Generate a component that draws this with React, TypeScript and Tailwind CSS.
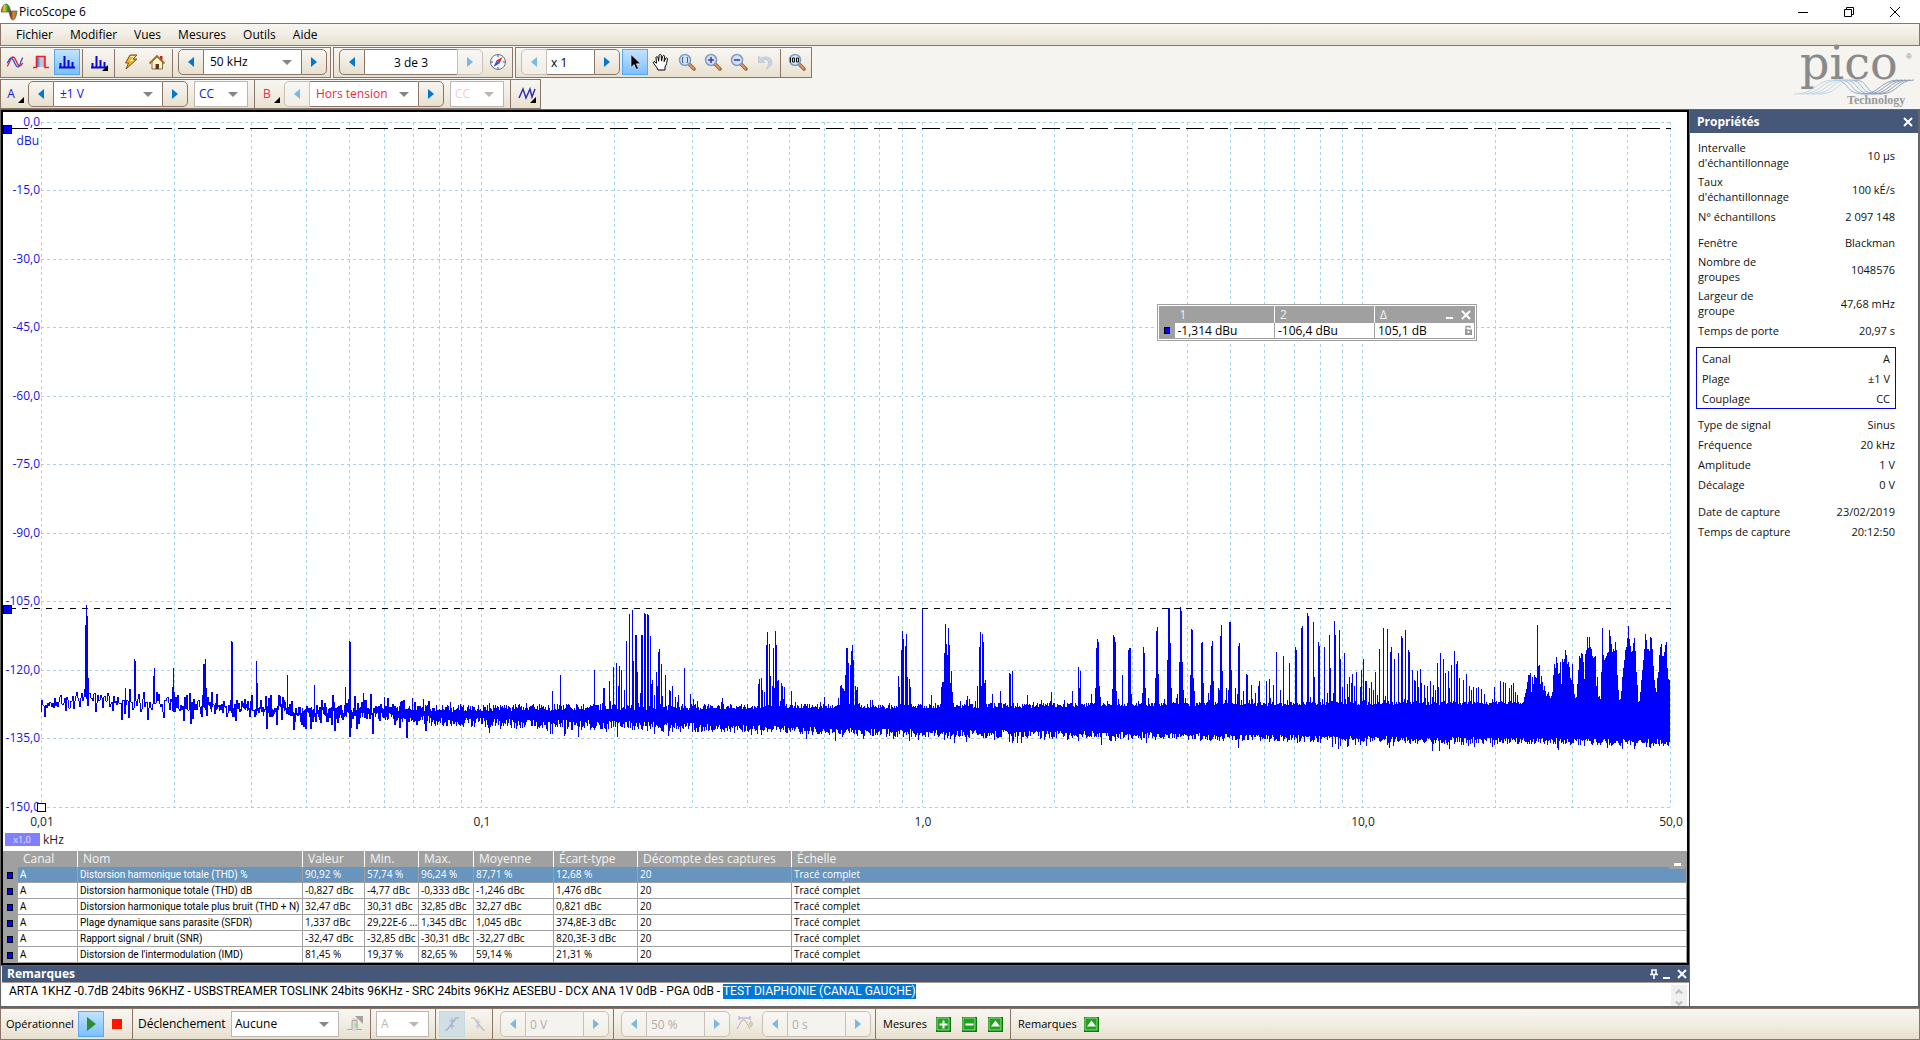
import React, { useEffect, useRef } from "react";

/* ---------- shared classes ---------- */
const BAR = "bg-linear-to-b from-[#f8f6f2] via-[#f1ede3] to-[#e8e0ce] border border-[#8b7468]";

/* ---------- small controls ---------- */
function Sep({ className = "ml-[2px] mr-[3px]" }: { className?: string }) {
  return <div className={`w-px self-stretch bg-[#8b7468] ${className}`} />;
}

function IconButton({ label, active = false, children }: { label: string; active?: boolean; children: React.ReactNode }) {
  return (
    <button
      aria-label={label}
      className={`relative flex h-[26px] w-[26px] shrink-0 items-center justify-center ${
        active ? "border border-[#5aa7ee] bg-linear-to-b from-[#c2e2ff] to-[#7cc0ff]" : ""
      }`}
    >
      {children}
    </button>
  );
}

function Arrow({ dir, muted }: { dir: "l" | "r"; muted?: boolean }) {
  return (
    <svg width="6" height="10" viewBox="0 0 6 10">
      <path d={dir === "l" ? "M6 0V10L0 5Z" : "M0 0V10L6 5Z"} fill={muted ? "#79b9e4" : "#0078cf"} />
    </svg>
  );
}

function Chevron({ muted }: { muted?: boolean }) {
  return (
    <svg className="pointer-events-none absolute right-[9px] top-1/2 -mt-[2px]" width="10" height="5" viewBox="0 0 10 5">
      <path d="M0 0H10L5 5Z" fill={muted ? "#bdb6b0" : "#868686"} />
    </svg>
  );
}

type SpinnerProps = {
  label: string;
  value: string;
  width: string;
  color?: string;
  drop?: boolean;
  center?: boolean;
  leftMuted?: boolean;
  rightMuted?: boolean;
  disabled?: boolean;
};

function Spinner({ label, value, width, color = "text-black", drop, center, leftMuted, rightMuted, disabled }: SpinnerProps) {
  const lm = leftMuted || disabled;
  const rm = rightMuted || disabled;
  return (
    <div className="flex h-[26px] shrink-0">
      <button
        aria-label={`${label} précédent`}
        className={`flex w-[26px] items-center justify-center rounded-l-[5px] border bg-linear-to-b ${
          lm ? "border-[#c9bfb8] from-[#f8f7f5] to-[#f2eee5]" : "border-[#8b7468] from-[#f8f6f2] to-[#e8e0ce]"
        }`}
      >
        <Arrow dir="l" muted={lm} />
      </button>
      <div className={`relative ${width} border-y ${disabled ? "border-[#c9bfb8] bg-[#f5f3f0]" : "border-[#8b7468] bg-white"}`}>
        {drop ? (
          <>
            <select aria-label={label} className={`h-full w-full appearance-none bg-transparent pl-[6px] ${color}`}>
              <option>{value}</option>
            </select>
            <Chevron />
          </>
        ) : (
          <input
            aria-label={label}
            defaultValue={value}
            disabled={disabled}
            className={`h-full w-full bg-transparent ${center ? "text-center" : "pl-[4px]"} ${disabled ? "text-[#b3aeaa]" : color}`}
          />
        )}
      </div>
      <button
        aria-label={`${label} suivant`}
        className={`flex w-[26px] items-center justify-center rounded-r-[5px] border bg-linear-to-b ${
          rm ? "border-[#c9bfb8] from-[#f8f7f5] to-[#f2eee5]" : "border-[#8b7468] from-[#f8f6f2] to-[#e8e0ce]"
        }`}
      >
        <Arrow dir="r" muted={rm} />
      </button>
    </div>
  );
}

function Combo({ label, value, width, color, muted }: { label: string; value: string; width: string; color: string; muted?: boolean }) {
  return (
    <div className={`relative h-[26px] shrink-0 border border-[#bdb6b0] bg-white ${width}`}>
      <select aria-label={label} className={`h-full w-full appearance-none bg-transparent pl-[4px] ${color}`}>
        <option>{value}</option>
      </select>
      <Chevron muted={muted} />
    </div>
  );
}

function Corner() {
  return (
    <svg className="absolute bottom-[4px] right-[4px]" width="6" height="6" viewBox="0 0 6 6">
      <path d="M6 0V6H0Z" fill="#000" />
    </svg>
  );
}

/* ---------- icons ---------- */
const ic = { width: 18, height: 18, viewBox: "0 0 18 18", fill: "none" } as const;

function AppIcon() {
  return (
    <svg width="17" height="18" viewBox="0 0 17 18">
      <defs>
        <linearGradient id="rb" x1="0" x2="1" y1="0" y2="0">
          <stop offset="0" stopColor="#e02020" />
          <stop offset=".2" stopColor="#e8d020" />
          <stop offset=".42" stopColor="#20a030" />
          <stop offset=".6" stopColor="#7a3a20" />
          <stop offset=".78" stopColor="#f08020" />
          <stop offset="1" stopColor="#30a030" />
        </linearGradient>
      </defs>
      <path d="M0 9C1 3 3 1 5 1c3 0 4 4 4.500 7H16C15.500 13 14 17 12 17c-2.500 0-3-5-4-8Z" fill="url(#rb)" stroke="#55585a" strokeWidth=".7" />
    </svg>
  );
}
const Waves = () => (
  <svg {...ic}>
    <path d="M1 13C3 13 4 4 7 4s4 9 6.500 9c1.500 0 2-2 3.500-3" stroke="#e02530" strokeWidth="1.400" />
    <path d="M1 10c2-1 2-5 4-5 3 0 4 9 7 9 2.500 0 3-9 5-9" stroke="#3d55d8" strokeWidth="1.400" />
  </svg>
);
const Pulse = () => (
  <svg {...ic}>
    <defs>
      <linearGradient id="pg" x1="0" x2="1" y1="0" y2="0">
        <stop offset="0" stopColor="#2d7fd0" />
        <stop offset=".5" stopColor="#b8d8e8" />
        <stop offset="1" stopColor="#e88" />
      </linearGradient>
    </defs>
    <path d="M5 4h8v10H5z" fill="url(#pg)" />
    <path d="M1 14.500H4.500V3.500h8.500v11h4" stroke="#f02028" strokeWidth="1.600" />
  </svg>
);
const Bars = () => (
  <svg {...ic}>
    <path d="M2.500 14V10M6.500 14V3M10.500 14V7M14.500 14V9M1 14.500H17" stroke="#0808d8" strokeWidth="2" />
  </svg>
);
const Bolt = () => (
  <svg {...ic}>
    <path d="M8 2h7l-4 4h4L4 16l2.500-6H3.500Z" fill="#f0b428" stroke="#7d4b10" />
    <path d="M8.500 3.500h4l-4 4h3" stroke="#fff0a0" />
  </svg>
);
const House = () => (
  <svg {...ic}>
    <path d="M12 3h2.500v5H12z" fill="#b02818" />
    <path d="M4 9l5-5 5.500 5v7H4Z" fill="#fff3cf" stroke="#8a6a30" />
    <path d="M1.500 10.500L9 3l7.500 7.500" stroke="#a0702c" strokeWidth="1.800" />
    <path d="M7.500 11h3.500v5H7.500z" fill="#5a3818" />
  </svg>
);
const Compass = () => (
  <svg {...ic}>
    <circle cx="9" cy="9" r="7.500" fill="#f4f7fb" stroke="#6b7078" />
    <path d="M9 2v2M9 14v2M2 9h2M14 9h2" stroke="#345ca8" />
    <path d="M13.500 4l-3 6.500-3-3Z" fill="#e02a20" />
    <path d="M4.500 14l3-6.500 3 3Z" fill="#3558c8" />
  </svg>
);
const Pointer = () => (
  <svg {...ic}>
    <path d="M5 1.500v13l3-3 2.200 5 2.300-1-2.200-4.700H14.500Z" fill="#000" stroke="#fff" strokeWidth=".6" />
  </svg>
);
const Hand = () => (
  <svg {...ic}>
    <path
      d="M6 17C5 14 2 11.500 1.200 9.300c.8-1.100 2-.6 3.300 1L4 4.500c.3-1.300 1.800-1.200 2 .2l.6 3.500L7.200 2.300c.3-1.200 1.800-1.200 2 0l.3 5.800 1.200-5c.4-1.100 1.800-.8 1.900.3l-.5 5.300 1.500-3.300c.6-1 1.900-.5 1.800.6-.5 3.300-1 6-2.400 8V17Z"
      fill="#fff"
      stroke="#000"
    />
  </svg>
);
function Lens({ children }: { children?: React.ReactNode }) {
  return (
    <svg {...ic}>
      <path d="M11 11l5 5" stroke="#8a5a38" strokeWidth="3.400" strokeLinecap="round" />
      <path d="M11.300 11.300l4.400 4.400" stroke="#e8955a" strokeWidth="1.800" strokeLinecap="round" />
      <circle cx="7" cy="7" r="5.500" fill="#cfe2f6" stroke="#7f9cc4" strokeWidth="1.500" />
      {children}
    </svg>
  );
}
const Undo = () => (
  <svg {...ic}>
    <path d="M2.500 3v6.500H9L6.800 7.300C10 5.500 13 7 12.500 10.500 12.200 13 11 14.500 10 16c4-1.500 6-4 5.800-7C15.500 4 9.500 2.500 4.800 5.300Z" fill="#ccd3e0" stroke="#b4bccb" strokeWidth=".6" />
  </svg>
);
const Generator = () => (
  <svg {...ic}>
    <path d="M1 13L5 4l3 9 4-9 2 8 3-8" stroke="#3232a8" strokeWidth="1.500" />
  </svg>
);
const Green = ({ kind }: { kind: "plus" | "minus" | "up" }) => (
  <svg width="15" height="15" viewBox="0 0 15 15">
    <path d="M0 0H15V15H0Z" fill="#0a7a0a" />
    <path d="M1 1H13V13H1Z" fill="#1fa31f" stroke="#b8e8b0" strokeWidth=".8" />
    {kind === "plus" && <path d="M7.500 3.500v8M3.500 7.500h8" stroke="#fff" strokeWidth="2" />}
    {kind === "minus" && <path d="M3.500 7.500h8" stroke="#fff" strokeWidth="2" />}
    {kind === "up" && <path d="M7.500 3.500L12 9.500H3Z" fill="#fff" />}
  </svg>
);

function PicoLogo() {
  return (
    <svg className="mr-[2px] shrink-0 overflow-visible" width="124" height="62" viewBox="0 0 124 62" role="img" aria-label="pico Technology">
      <text x="6" y="33" fontFamily="DejaVu Serif, serif" fontSize="46" fill="#8a8a8a">
        pico
      </text>
      {[0, 1, 2, 3, 4].map((i) => (
        <g key={i} fill="none" strokeWidth="0.9">
          <path d={`M${i * 6} 48C${22 + i * 6} 48 ${22 + i * 5} 34 ${40 + i * 5} 34`} stroke="#b9d2ea" />
          <path d={`M${40 + i * 5} 34C${56 + i * 5} 34 ${50 + i * 5} 48 ${70 + i * 4} 48`} stroke="#8ea8c8" />
          <path d={`M${70 + i * 4} 48C${84 + i * 5} 48 ${88 + i * 4} 34 ${104 + i * 4} 34`} stroke="#8494b0" />
        </g>
      ))}
      <text x="112" y="13" fontFamily="Liberation Sans, sans-serif" fontSize="8" fill="#8a8a8a">
        ®
      </text>
      <text x="53" y="58" fontFamily="Liberation Serif, serif" fontWeight="700" fontSize="12" fill="#9a9a9a">
        Technology
      </text>
    </svg>
  );
}

/* ---------- spectrum ---------- */
const X0 = 41;
const X1 = 1670;
const DECADE = 440.4;

/* single-column peaks: x, top */
const PEAKS: number[] = [
  85, 625, 86, 605, 87, 616, 88, 678, 125, 688, 134, 659, 135, 661, 153, 676, 154, 668, 172, 687, 173, 668, 174, 692, 190, 693, 203, 664, 204, 664,
  205, 659, 206, 688, 231, 641, 232, 642, 256, 661, 257, 683, 287, 675, 314, 685, 345, 687, 349, 641, 350, 642, 363, 693, 384, 697, 412, 698,
  423, 699, 552, 691, 560, 675, 594, 670, 603, 688, 604, 688, 609, 681, 613, 667, 616, 663, 618, 686, 619, 666, 621, 670, 624, 690, 626, 641, 629, 614,
  632, 610, 633, 661, 635, 635, 636, 635, 637, 672, 640, 693, 641, 635, 642, 635, 644, 613, 645, 614, 647, 614, 648, 615, 650, 636, 651, 684, 652, 680,
  654, 695, 656, 672, 657, 686, 658, 652, 659, 649, 661, 664, 662, 696, 665, 675, 669, 690, 670, 691, 672, 686, 675, 697, 678, 695, 684, 668, 690, 694,
  722, 698, 758, 684, 759, 679, 761, 678, 762, 690, 764, 692, 766, 645, 767, 632, 769, 644, 770, 676, 772, 686, 773, 648, 774, 688, 775, 631, 776, 645,
  777, 681, 778, 680, 781, 683, 782, 686, 784, 687, 791, 691, 824, 697, 838, 698, 840, 686, 841, 685, 842, 688, 843, 689, 844, 691, 845, 675, 846, 648,
  847, 648, 848, 663, 850, 665, 851, 651, 852, 645, 853, 660, 855, 686, 856, 690, 857, 687, 898, 676, 899, 687, 901, 650, 902, 631, 903, 639, 905, 646,
  906, 634, 907, 677, 909, 679, 910, 687, 922, 609, 931, 695, 941, 687, 942, 682, 943, 682, 944, 653, 945, 624, 946, 644, 947, 655, 948, 628, 949, 645,
  950, 683, 951, 671, 952, 692, 967, 696, 977, 686, 979, 647, 980, 632, 981, 686, 982, 634, 983, 642, 984, 683, 985, 680, 992, 694, 1000, 691,
  1009, 673, 1010, 674, 1012, 671, 1027, 695, 1051, 692, 1072, 691, 1078, 667, 1079, 688, 1080, 671, 1091, 694, 1095, 688, 1096, 648, 1097, 639,
  1098, 642, 1099, 686, 1100, 697, 1112, 689, 1113, 635, 1114, 637, 1115, 642, 1116, 691, 1122, 675, 1128, 650, 1129, 648, 1130, 648, 1131, 694,
  1142, 693, 1143, 647, 1144, 653, 1145, 688, 1155, 678, 1156, 631, 1157, 627, 1158, 674, 1167, 660, 1168, 608, 1169, 608, 1170, 643, 1171, 688,
  1177, 694, 1179, 662, 1180, 607, 1181, 611, 1182, 662, 1183, 690, 1190, 675, 1191, 629, 1192, 630, 1193, 678, 1194, 691, 1201, 643, 1202, 642,
  1203, 683, 1208, 693, 1210, 685, 1211, 646, 1212, 641, 1213, 681, 1218, 688, 1219, 690, 1220, 636, 1221, 625, 1222, 671, 1226, 688, 1228, 690,
  1229, 622, 1230, 622, 1231, 670, 1235, 688, 1237, 694, 1238, 646, 1239, 643, 1243, 691, 1246, 674, 1247, 675, 1251, 685, 1255, 693, 1258, 686,
  1259, 681, 1266, 681, 1269, 679, 1273, 685, 1276, 652, 1280, 690, 1283, 656, 1289, 663, 1295, 647, 1296, 650, 1301, 628, 1302, 626, 1307, 613,
  1308, 616, 1313, 622, 1314, 677, 1318, 642, 1319, 646, 1324, 647, 1327, 693, 1329, 635, 1330, 668, 1333, 693, 1334, 621, 1335, 635, 1339, 630,
  1340, 659, 1342, 687, 1344, 653, 1347, 684, 1349, 677, 1351, 683, 1352, 674, 1354, 686, 1356, 672, 1360, 687, 1361, 670, 1363, 659, 1365, 681,
  1366, 681, 1369, 688, 1371, 682, 1373, 690, 1375, 672, 1377, 695, 1379, 649, 1383, 628, 1387, 629, 1390, 652, 1391, 647, 1394, 659, 1398, 653,
  1401, 636, 1402, 638, 1405, 630, 1408, 650, 1409, 652, 1412, 670, 1414, 680, 1415, 681, 1417, 671, 1418, 687, 1420, 669, 1421, 683, 1424, 685,
  1427, 686, 1430, 681, 1433, 685, 1435, 690, 1437, 663, 1438, 687, 1440, 653, 1443, 659, 1445, 673, 1448, 671, 1449, 688, 1451, 665, 1454, 651,
  1456, 664, 1457, 661, 1459, 678, 1463, 680, 1466, 674, 1469, 686, 1471, 690, 1473, 687, 1476, 688, 1478, 687, 1481, 689, 1484, 694, 1494, 687,
  1500, 681, 1503, 682, 1505, 683, 1509, 688, 1511, 685, 1513, 683, 1515, 692, 1517, 695,
];

/* continuous top edge of the right-hand lobes: x, top */
const LOBES: number[] = [
  1524, 697, 1526, 689, 1528, 675, 1529, 675, 1530, 673, 1531, 692, 1532, 677, 1533, 684, 1534, 675, 1535, 677, 1536, 678, 1537, 625, 1538, 666, 1539, 665,
  1540, 684, 1541, 676, 1542, 682, 1543, 690, 1544, 686, 1546, 696, 1548, 692, 1550, 699, 1552, 692, 1553, 675, 1554, 664, 1555, 668, 1556, 657, 1557, 663,
  1558, 674, 1559, 673, 1560, 662, 1561, 684, 1562, 659, 1563, 662, 1564, 659, 1565, 650, 1566, 655, 1567, 664, 1568, 662, 1569, 667, 1570, 678, 1571, 680,
  1572, 664, 1573, 684, 1574, 694, 1576, 702, 1577, 684, 1578, 670, 1579, 656, 1580, 658, 1581, 653, 1582, 654, 1583, 662, 1584, 679, 1585, 654, 1586, 650,
  1587, 637, 1588, 648, 1589, 637, 1590, 647, 1591, 649, 1592, 656, 1593, 658, 1594, 657, 1595, 656, 1596, 686, 1597, 677, 1598, 697, 1599, 696, 1600, 699,
  1601, 672, 1602, 628, 1603, 655, 1604, 660, 1605, 658, 1607, 653, 1608, 652, 1609, 630, 1610, 636, 1611, 644, 1612, 652, 1613, 649, 1614, 651, 1615, 642,
  1616, 650, 1617, 675, 1618, 690, 1619, 700, 1620, 699, 1621, 691, 1622, 677, 1623, 668, 1624, 660, 1625, 650, 1626, 647, 1627, 638, 1628, 626, 1629, 639,
  1630, 646, 1631, 652, 1632, 651, 1633, 643, 1634, 638, 1635, 651, 1636, 672, 1637, 685, 1638, 702, 1639, 701, 1640, 692, 1641, 680, 1642, 670, 1643, 660,
  1644, 649, 1645, 634, 1646, 640, 1647, 649, 1648, 649, 1649, 651, 1650, 637, 1651, 638, 1652, 649, 1653, 666, 1654, 680, 1655, 688, 1656, 692, 1657, 678,
  1658, 672, 1659, 655, 1660, 647, 1661, 644, 1662, 656, 1663, 656, 1664, 652, 1665, 645, 1666, 642, 1667, 668, 1668, 679, 1669, 680, 1670, 680,
];

function interp(points: number[], x: number) {
  for (let i = 2; i < points.length; i += 2) {
    if (x <= points[i]) {
      const t = (x - points[i - 2]) / (points[i] - points[i - 2]);
      return points[i - 1] + t * (points[i + 1] - points[i - 1]);
    }
  }
  return points[points.length - 1];
}

function buildTrace() {
  let seed = 20190223;
  const rnd = () => {
    seed = (seed * 1664525 + 1013904223) % 4294967296;
    return seed / 4294967296;
  };
  const peaks = new Map<number, number>();
  for (let i = 0; i < PEAKS.length; i += 2) peaks.set(PEAKS[i], PEAKS[i + 1]);

  const CENTER = [41, 704, 86, 699, 150, 704, 230, 708, 320, 713, 400, 715, 1670, 715];
  const TOP = [41, 700, 350, 709, 480, 708, 620, 707, 920, 706, 1200, 704, 1670, 702];
  const BOTTOM = [41, 708, 350, 719, 420, 723, 480, 725, 620, 728, 760, 731, 920, 735, 1150, 737, 1362, 741, 1670, 744];
  let d = "";
  let prev = 712;
  for (let x = X0; x < X1; x++) {
    let top: number;
    let bottom: number;
    if (x < 430) {
      const amp = 7 + ((x - X0) / 389) * 8;
      const v = interp(CENTER, x) + (rnd() + rnd() + rnd() - 1.5) * amp * 1.3 + (rnd() < 0.06 ? amp * 0.8 : 0);
      top = Math.min(prev, v);
      bottom = Math.max(prev, v);
      if (x > 200) {
        const f = (x - 200) / 230;
        top = Math.min(top, interp(TOP, x) + (1 - f) * 5 + rnd() * 7 - 4);
        bottom = Math.max(bottom, interp(BOTTOM, x) - (1 - f) * 5 - rnd() * 7 + (rnd() < 0.15 ? rnd() * 8 : 0));
      }
      prev = v;
    } else {
      const rough = x < 700 ? 7 : x < 1100 ? 5 : 4;
      top = interp(TOP, x) + (rnd() - 0.5) * rough - (rnd() < 0.14 ? rnd() * 6 : 0);
      bottom = interp(BOTTOM, x) + (rnd() - 0.7) * (rough + 3) + (rnd() < 0.14 ? rnd() * 8 : 0);
    }
    const p = peaks.get(x);
    if (p !== undefined) top = Math.min(top, p);
    if (x >= 1524) top = Math.min(top, interp(LOBES, x));
    const a = Math.round(top);
    const b = Math.max(a + 1, Math.round(bottom));
    d += `M${x} ${a}h1V${b}h-1Z`;
  }
  return d;
}
const TRACE = buildTrace();

const VLINES: number[] = [];
for (let dec = 0; dec < 4; dec++) {
  for (let m = 1; m < 10; m++) {
    const x = X0 + DECADE * (dec + Math.log10(m));
    if (x < X1) VLINES.push(Math.round(x));
  }
}
VLINES.push(X1);
const Y_LABELS = ["0,0", "-15,0", "-30,0", "-45,0", "-60,0", "-75,0", "-90,0", "-105,0", "-120,0", "-135,0", "-150,0"];
const X_LABELS: [number, string][] = [
  [42, "0,01"],
  [482, "0,1"],
  [923, "1,0"],
  [1363, "10,0"],
  [1671, "50,0"],
];

function Spectrum() {
  return (
    <svg className="block h-full w-full" viewBox="3 112 1684 739" preserveAspectRatio="xMinYMin meet" role="img" aria-label="Spectre">
      <g stroke="#a5d3e0" strokeWidth="1" shapeRendering="crispEdges">
        {VLINES.map((x) => (
          <path key={x} d={`M${x + 0.5} 122V807`} strokeDasharray="3 3" />
        ))}
        {Y_LABELS.map((t, i) => (
          <path key={t} d={`M41 ${Math.floor(122 + 68.5 * i) + 0.5}H1671`} strokeDasharray="3 3" />
        ))}
      </g>
      <g fontFamily="Open Sans, sans-serif" fontSize="12">
        <g fill="#1414e6" textAnchor="end">
          {Y_LABELS.map((t, i) => (
            <text key={t} x="40" y={126 + Math.floor(68.5 * i)}>
              {t}
            </text>
          ))}
          <text x="39" y="145">
            dBu
          </text>
        </g>
        <g fill="#222" textAnchor="middle">
          {X_LABELS.map(([x, t]) => (
            <text key={t} x={x} y="826">
              {t}
            </text>
          ))}
        </g>
        <text x="43" y="844" fill="#222">
          kHz
        </text>
      </g>
      <path d="M10 128.500H1671" stroke="#000" strokeDasharray="18 6" shapeRendering="crispEdges" />
      <path d="M10 608.500H1671" stroke="#000" strokeDasharray="6 6" shapeRendering="crispEdges" />
      <path d={TRACE} fill="#0000ff" shapeRendering="crispEdges" />
      <g shapeRendering="crispEdges">
        <path d="M3.500 125.500h8v8h-8z" fill="#00f" stroke="#000" />
        <path d="M3.500 605.500h8v8h-8z" fill="#00f" stroke="#000" />
        <path d="M37.500 803.500h8v8h-8z" fill="#fff" stroke="#000" />
        <path d="M5 833h35v13H5z" fill="#8080ff" />
      </g>
      <text x="22" y="843" fontFamily="Open Sans, sans-serif" fontSize="9" fill="#e6e6ff" textAnchor="middle">
        x1,0
      </text>
    </svg>
  );
}

/* ---------- ruler readout ---------- */
function CloseX({ size = 9 }: { size?: number }) {
  return (
    <svg width={size} height={size} viewBox="0 0 10 10">
      <path d="M1 1l8 8M9 1l-8 8" stroke="#fff" strokeWidth="2" />
    </svg>
  );
}

function Marker() {
  return <div className="h-[7px] w-[6px] border border-black bg-[#0000ff]" />;
}

function RulerLegend() {
  return (
    <div className="absolute left-[1154px] top-[192px] w-[320px] border border-[#a0a0a0] bg-white p-px text-[12px] leading-[15px]">
      <table className="w-full table-fixed border-collapse border border-[#a0a0a0]">
        <thead className="bg-[#a0a0a0] text-left text-[#f0f0f0]">
          <tr className="h-[16px]">
            <th className="w-[15px]" />
            <th className="w-[100px] border-r border-white pl-[5px] font-normal">1</th>
            <th className="w-[100px] border-r border-white pl-[5px] font-normal">2</th>
            <th className="pl-[5px] font-normal">
              <div className="flex items-center">
                <span className="flex-1">Δ</span>
                <button aria-label="Réduire" className="mr-[8px] mt-[6px] h-[2px] w-[7px] bg-white" />
                <button aria-label="Fermer la légende" className="mr-[3px]">
                  <CloseX size={10} />
                </button>
              </div>
            </th>
          </tr>
        </thead>
        <tbody>
          <tr className="h-[16px]">
            <td className="bg-[#a0a0a0] pl-[4px]">
              <Marker />
            </td>
            <td className="border-r border-[#a0a0a0] pl-[3px]">-1,314 dBu</td>
            <td className="border-r border-[#a0a0a0] pl-[3px]">-106,4 dBu</td>
            <td className="pl-[3px]">
              <div className="flex items-center justify-between">
                <span>105,1 dB</span>
                <svg className="mr-[2px]" width="7" height="10" viewBox="0 0 7 10">
                  <path d="M1 5V1.500h4V3" fill="none" stroke="#999" strokeWidth="1.400" />
                  <path d="M0 4.500h7V10H0z" fill="#999" />
                  <path d="M2.500 6h2v2h-2z" fill="#fff" />
                </svg>
              </div>
            </td>
          </tr>
        </tbody>
      </table>
    </div>
  );
}

/* ---------- measurements ---------- */
const HEAD = ["Canal", "Nom", "Valeur", "Min.", "Max.", "Moyenne", "Écart-type", "Décompte des captures", "Échelle"];
const ROWS = [
  ["A", "Distorsion harmonique totale (THD) %", "90,92 %", "57,74 %", "96,24 %", "87,71 %", "12,68 %", "20", "Tracé complet"],
  ["A", "Distorsion harmonique totale (THD) dB", "-0,827 dBc", "-4,77 dBc", "-0,333 dBc", "-1,246 dBc", "1,476 dBc", "20", "Tracé complet"],
  ["A", "Distorsion harmonique totale plus bruit (THD + N)", "32,47 dBc", "30,31 dBc", "32,85 dBc", "32,27 dBc", "0,821 dBc", "20", "Tracé complet"],
  ["A", "Plage dynamique sans parasite (SFDR)", "1,337 dBc", "29,22E-6 ...", "1,345 dBc", "1,045 dBc", "374,8E-3 dBc", "20", "Tracé complet"],
  ["A", "Rapport signal / bruit (SNR)", "-32,47 dBc", "-32,85 dBc", "-30,31 dBc", "-32,27 dBc", "820,3E-3 dBc", "20", "Tracé complet"],
  ["A", "Distorsion de l'intermodulation (IMD)", "81,45 %", "19,37 %", "82,65 %", "59,14 %", "21,31 %", "20", "Tracé complet"],
];

function Measurements() {
  return (
    <div className="relative shrink-0 bg-white">
      <table className="w-full table-fixed border-separate border-spacing-0 border-r border-[#a0a0a0]">
        <colgroup>
          <col className="w-[15px]" />
          <col className="w-[60px]" />
          <col className="w-[225px]" />
          <col className="w-[62px]" />
          <col className="w-[54px]" />
          <col className="w-[55px]" />
          <col className="w-[80px]" />
          <col className="w-[84px]" />
          <col className="w-[154px]" />
          <col />
        </colgroup>
        <thead className="bg-[#a0a0a0] text-left text-[12px] leading-[16px] text-[#f4f4f4]">
          <tr className="h-[16px]">
            <th />
            {HEAD.map((h, i) => (
              <th key={h} className={`whitespace-nowrap pl-[5px] font-normal ${i < 8 ? "border-r border-white" : ""}`}>
                {h}
              </th>
            ))}
          </tr>
        </thead>
        <tbody className="text-[10px] leading-[15px]">
          {ROWS.map((r, n) => (
            <tr key={r[1]} className={`h-[16px] ${n === 0 ? "bg-[#6795bd] text-white" : "bg-white text-black"}`}>
              <td className="bg-[#a0a0a0] pl-[4px]">
                <Marker />
              </td>
              {r.map((c, i) => (
                <td
                  key={i}
                  className={`overflow-hidden whitespace-nowrap border-b border-[#a0a0a0] pl-[2px] ${i < 8 ? "border-r" : ""} ${
                    i === 1 ? "font-[Roboto,sans-serif]" : ""
                  }`}
                >
                  {c}
                </td>
              ))}
            </tr>
          ))}
        </tbody>
      </table>
      <button aria-label="Réduire les mesures" className="absolute right-[2px] top-[8px] flex h-[10px] w-[16px] items-center justify-center bg-[#a0a0a0]">
        <span className="h-[3px] w-[7px] bg-white" />
      </button>
    </div>
  );
}

/* ---------- properties ---------- */
function Prop({ name, value }: { name: string; value: string }) {
  return (
    <div className="flex min-h-[20px] items-center justify-between py-[2px]">
      <dt className="w-[93px] leading-[15px]">{name}</dt>
      <dd className="leading-[15px]">{value}</dd>
    </div>
  );
}

function Properties() {
  return (
    <aside className="flex w-[228px] shrink-0 flex-col bg-white text-[11px] text-[#111]">
      <header className="flex h-[23px] items-center justify-between bg-[#455879] pl-[7px] pr-[5px]">
        <h2 className="text-[12px] font-bold text-white">Propriétés</h2>
        <button aria-label="Fermer Propriétés">
          <CloseX size={10} />
        </button>
      </header>
      <dl className="pl-[8px] pr-[23px] pt-[5px]">
        <Prop name="Intervalle d'échantillonnage" value="10 µs" />
        <Prop name="Taux d'échantillonnage" value="100 kÉ/s" />
        <Prop name="N° échantillons" value="2 097 148" />
        <div className="mt-[6px]">
          <Prop name="Fenêtre" value="Blackman" />
          <Prop name="Nombre de groupes" value="1048576" />
          <Prop name="Largeur de groupe" value="47,68 mHz" />
          <Prop name="Temps de porte" value="20,97 s" />
        </div>
        <div className="-ml-[2px] -mr-[1px] mt-[7px] border border-[#0000e0] px-[5px]">
          <Prop name="Canal" value="A" />
          <Prop name="Plage" value="±1 V" />
          <Prop name="Couplage" value="CC" />
        </div>
        <div className="mt-[5px]">
          <Prop name="Type de signal" value="Sinus" />
          <Prop name="Fréquence" value="20 kHz" />
          <Prop name="Amplitude" value="1 V" />
          <Prop name="Décalage" value="0 V" />
        </div>
        <div className="mt-[7px]">
          <Prop name="Date de capture" value="23/02/2019" />
          <Prop name="Temps de capture" value="20:12:50" />
        </div>
      </dl>
    </aside>
  );
}

/* ---------- notes ---------- */
const NOTE =
  "ARTA 1KHZ -0.7dB 24bits 96KHZ - USBSTREAMER TOSLINK 24bits 96KHz - SRC 24bits 96KHz AESEBU - DCX ANA 1V 0dB - PGA 0dB - TEST DIAPHONIE (CANAL GAUCHE)";

function Notes() {
  const ref = useRef<HTMLTextAreaElement>(null);
  useEffect(() => {
    ref.current?.focus();
    ref.current?.setSelectionRange(NOTE.indexOf("TEST"), NOTE.length);
  }, []);
  return (
    <section className="flex shrink-0 flex-col border-t border-[#666] pl-px">
      <header className="flex h-[16px] items-center bg-[#455879] pl-[5px] pr-[2px] text-white">
        <h2 className="flex-1 text-[12px] font-bold leading-[16px]">Remarques</h2>
        <button aria-label="Épingler" className="mr-[5px]">
          <svg width="8" height="10" viewBox="0 0 8 10">
            <path d="M2 5.500V1h4v4.500M0 5.500h8M4 5.500V10" fill="none" stroke="#fff" strokeWidth="1.600" />
          </svg>
        </button>
        <button aria-label="Réduire Remarques" className="mr-[7px] mt-[7px] h-[2px] w-[7px] bg-white" />
        <button aria-label="Fermer Remarques">
          <CloseX size={10} />
        </button>
      </header>
      <div className="flex h-[24px] border-t border-[#a89c94] bg-white">
        <textarea
          ref={ref}
          aria-label="Remarques"
          defaultValue={NOTE}
          className="block h-full flex-1 resize-none overflow-hidden px-[7px] pt-px font-[Roboto,sans-serif] text-[12px] leading-[15px] text-black outline-none selection:bg-[#0078d7] selection:text-white"
        />
        <div className="mr-[2px] mt-[2px] flex w-[16px] flex-col items-center justify-between bg-[#f0f0f0] pt-[4px]">
          <svg width="8" height="5" viewBox="0 0 8 5">
            <path d="M1 4.500L4 1.500l3 3" fill="none" stroke="#bcbcbc" strokeWidth="2" />
          </svg>
          <svg width="8" height="5" viewBox="0 0 8 5">
            <path d="M1 .5l3 3 3-3" fill="none" stroke="#bcbcbc" strokeWidth="2" />
          </svg>
        </div>
      </div>
    </section>
  );
}

/* ---------- bars ---------- */
function Toolbars() {
  return (
    <div className="relative flex shrink-0 items-start justify-between">
      <div className="flex flex-col gap-px pt-px">
        <div className="flex gap-[2px]">
          <div className={`flex h-[31px] items-start pl-px pr-[3px] pt-px ${BAR}`}>
            <IconButton label="Mode oscilloscope"><Waves /></IconButton>
            <IconButton label="Mode persistance"><Pulse /></IconButton>
            <IconButton label="Mode spectre" active><Bars /></IconButton>
            <Sep />
            <IconButton label="Options de spectre"><Bars /><Corner /></IconButton>
            <Sep />
            <IconButton label="Configuration auto"><Bolt /></IconButton>
            <IconButton label="Accueil"><House /></IconButton>
            <Sep className="ml-[2px] mr-[5px]" />
            <Spinner label="Plage de fréquence" value="50 kHz" width="w-[97px]" drop />
          </div>
          <div className={`flex h-[31px] items-start pl-[5px] pr-px pt-px ${BAR}`}>
            <Spinner label="Tampon" value="3 de 3" width="w-[92px]" center rightMuted />
            <div className="w-[2px]" />
            <IconButton label="Navigateur de tampon"><Compass /></IconButton>
          </div>
          <div className={`flex h-[31px] items-start pl-[5px] pr-px pt-px ${BAR}`}>
            <Spinner label="Zoom" value="x 1" width="w-[47px]" leftMuted />
            <div className="w-[2px]" />
            <IconButton label="Sélection" active><Pointer /></IconButton>
            <IconButton label="Main"><Hand /></IconButton>
            <IconButton label="Zoom fenêtre">
              <Lens><path d="M5.500 4.500h-1v5h1M8.500 4.500h1v5h-1" stroke="#445c9c" /></Lens>
            </IconButton>
            <IconButton label="Zoom avant">
              <Lens><path d="M7 4v6M4 7h6" stroke="#5038a0" strokeWidth="1.600" /></Lens>
            </IconButton>
            <IconButton label="Zoom arrière">
              <Lens><path d="M4 7h6" stroke="#5038a0" strokeWidth="1.600" /></Lens>
            </IconButton>
            <IconButton label="Annuler le zoom"><Undo /></IconButton>
            <Sep />
            <IconButton label="Zoom 100">
              <Lens><path d="M2.500 4.500v5M4.500 5h2v4h-2zM8.500 5h2v4h-2z" stroke="#111" strokeWidth="1" /></Lens>
            </IconButton>
          </div>
        </div>
        <div className={`flex h-[30px] items-center self-start pl-px ${BAR}`}>
          <IconButton label="Voie A"><span className="mr-[8px] text-[#1414e6]">A</span><Corner /></IconButton>
          <Spinner label="Plage A" value="±1 V" width="w-[108px]" color="text-[#1414e6]" drop />
          <div className="w-[6px]" />
          <Combo label="Couplage A" value="CC" width="w-[54px]" color="text-[#1414e6]" />
          <Sep className="ml-[6px] mr-[3px]" />
          <IconButton label="Voie B"><span className="mr-[8px] text-[#f02840]">B</span><Corner /></IconButton>
          <Spinner label="Plage B" value="Hors tension" width="w-[108px]" color="text-[#f02840]" drop leftMuted />
          <div className="w-[6px]" />
          <Combo label="Couplage B" value="CC" width="w-[54px]" color="text-[#f8c8cc]" muted />
          <Sep className="ml-[6px] mr-[3px]" />
          <IconButton label="Générateur de signaux"><Generator /><Corner /></IconButton>
        </div>
      </div>
      <PicoLogo />
    </div>
  );
}

function StatusBar() {
  return (
    <footer className={`flex h-[32px] shrink-0 items-center pl-[5px] ${BAR}`}>
      <span className="w-[72px] whitespace-nowrap text-[11px]">Opérationnel</span>
      <IconButton label="Démarrer" active>
        <svg width="9" height="14" viewBox="0 0 9 14"><path d="M0 0L9 7L0 14Z" fill="#2e8b2e" /></svg>
      </IconButton>
      <IconButton label="Arrêter"><span className="h-[10px] w-[10px] bg-[#ff1400]" /></IconButton>
      <Sep className="ml-[2px] mr-[5px]" />
      <label htmlFor="trigger" className="w-[93px] whitespace-nowrap">Déclenchement</label>
      <div className="relative h-[26px] w-[108px] border border-[#bdb6b0] bg-white">
        <select id="trigger" className="h-full w-full appearance-none bg-transparent pl-[3px]">
          <option>Aucune</option>
        </select>
        <Chevron />
      </div>
      <div className="w-[3px]" />
      <IconButton label="Déclenchement avancé">
        <svg {...ic}>
          <path d="M6 3h6v13H6z" fill="#dcdad8" />
          <path d="M1 14.500h5V5.500h5v9h5" stroke="#b0aaa6" />
          <path d="M9 1h8v8z" fill="#a8a29e" />
          <circle cx="10.500" cy="10" r="2" fill="#96dc96" />
        </svg>
      </IconButton>
      <Sep className="ml-[2px] mr-[5px]" />
      <Combo label="Source" value="A" width="w-[53px]" color="text-[#b8b8b8]" muted />
      <Sep className="ml-[6px] mr-[3px]" />
      <button aria-label="Front montant" className="flex h-[26px] w-[26px] items-center justify-center border border-[#c4d8e2] bg-[#d0dfe3]">
        <svg {...ic}>
          <path d="M2 15h2L13 3h3" stroke="#a5a5a8" strokeWidth="1.200" />
          <path d="M9 3v11M6.500 6h5M6.500 11h5" stroke="#b0a6e6" />
        </svg>
      </button>
      <IconButton label="Front descendant">
        <svg {...ic}>
          <path d="M2 3h3l9 12h2" stroke="#b9b4af" strokeWidth="1.200" />
          <path d="M9 4v10M6.500 7h5M6.500 11h5" stroke="#c3bbea" />
        </svg>
      </IconButton>
      <Sep className="ml-[1px] mr-[7px]" />
      <Spinner label="Seuil" value="0 V" width="w-[57px]" disabled />
      <Sep className="ml-[4px] mr-[7px]" />
      <Spinner label="Prédéclenchement" value="50 %" width="w-[57px]" disabled />
      <div className="w-[2px]" />
      <IconButton label="Retard">
        <svg {...ic}>
          <path d="M1 14L6 5h3l5 9" stroke="#b9b4af" />
          <path d="M3 3h11M3 1v4M14 1v4" stroke="#a89ce6" />
          <path d="M15 6l2 3-2 3-2-3Z" fill="#dcd896" stroke="#aaa" strokeWidth=".5" />
        </svg>
      </IconButton>
      <div className="w-[4px]" />
      <Spinner label="Délai" value="0 s" width="w-[57px]" disabled />
      <Sep className="ml-[4px] mr-[7px]" />
      <span className="w-[47px] whitespace-nowrap text-[11px]">Mesures</span>
      <IconButton label="Ajouter une mesure"><Green kind="plus" /></IconButton>
      <IconButton label="Supprimer une mesure"><Green kind="minus" /></IconButton>
      <IconButton label="Modifier une mesure"><Green kind="up" /></IconButton>
      <Sep className="ml-[2px] mr-[7px]" />
      <span className="w-[60px] whitespace-nowrap text-[11px]">Remarques</span>
      <IconButton label="Afficher les remarques"><Green kind="up" /></IconButton>
    </footer>
  );
}

export default function App() {
  return (
    <div className="flex h-screen flex-col overflow-hidden bg-[#f5f4f1] font-['Open_Sans','Noto_Sans',sans-serif] text-[12px] text-black">
      <header className="flex h-[23px] shrink-0 items-center bg-white pl-px">
        <AppIcon />
        <h1 className="flex-1 pl-px text-[12px]">PicoScope 6</h1>
        <button aria-label="Réduire" className="flex w-[46px] justify-center">
          <svg width="10" height="10" viewBox="0 0 10 10"><path d="M0 5.500h10" stroke="#000" /></svg>
        </button>
        <button aria-label="Restaurer" className="flex w-[46px] justify-center">
          <svg width="10" height="10" viewBox="0 0 10 10" fill="none" stroke="#000"><path d="M.5 2.500h7v7h-7zM2.500 2.500v-2h7v7h-2" /></svg>
        </button>
        <button aria-label="Fermer" className="mr-[2px] flex w-[46px] justify-center">
          <svg width="10" height="10" viewBox="0 0 10 10"><path d="M0 0l10 10M10 0L0 10" stroke="#000" /></svg>
        </button>
      </header>
      <nav className={`flex h-[23px] shrink-0 items-center gap-[17px] pl-[15px] text-[12px] ${BAR}`}>
        {["Fichier", "Modifier", "Vues", "Mesures", "Outils", "Aide"].map((m) => (
          <button key={m}>{m}</button>
        ))}
      </nav>
      <Toolbars />
      <div className="flex min-h-0 flex-1 border-b-2 border-t border-[#666]">
        <div className="flex min-w-0 flex-1 flex-col border-l border-r border-[#666]">
          <main className="flex min-h-0 flex-1 flex-col border-2 border-black bg-white">
            <div className="relative min-h-0 flex-1">
              <Spectrum />
              <RulerLegend />
            </div>
            <Measurements />
          </main>
          <Notes />
        </div>
        <Properties />
        <div className="w-[2px] bg-[#666]" />
      </div>
      <StatusBar />
    </div>
  );
}
